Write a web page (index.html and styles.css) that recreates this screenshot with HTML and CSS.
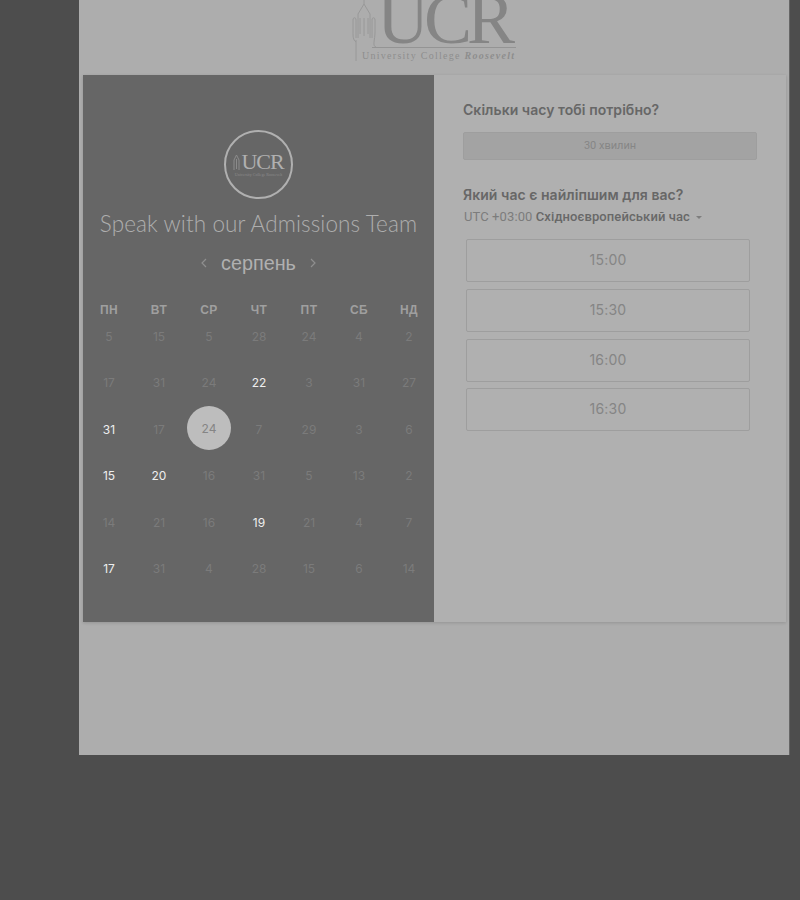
FILE: index.html
```html
<!DOCTYPE html>
<html lang="uk">
<head>
<meta charset="utf-8">
<title>Speak with our Admissions Team</title>
<link rel="stylesheet" href="styles.css">
</head>
<body>
<main class="page">
  <header class="header">
    <div class="logo">
      <svg class="tower" width="24" height="61" viewBox="0 0 24 61" fill="none" stroke="#989898" stroke-width="1">
        <path d="M4 40V61M4 42C1 40 1 36 1 32V20C1 17 4 17 4 20V38M6 38V14L12 4L18 14V38M8 18V34M12 18V36M16 18V34M12 4V0M20 38V20C20 17 23 17 23 20V32C23 40 20 46 24 47"/>
      </svg>
      <div class="logo-text">
        <div class="logo-mark">UCR</div>
        <div class="logo-rule"></div>
        <div class="logo-sub"><span>University College</span> <em>Roosevelt</em></div>
      </div>
    </div>
  </header>
  <section class="card">
    <div class="left">
      <div class="badge">
        <div class="badge-row">
          <svg class="badge-tower" width="7" height="16" viewBox="0 0 7 16" fill="none" stroke="#8c8c8c" stroke-width="1"><path d="M1 16V6L3.5 1L6 6V16M3.5 5V15"/></svg>
          <span class="badge-mark">UCR</span>
        </div>
        <div class="badge-sub">University College Roosevelt</div>
      </div>
      <h1 class="title">Speak with our Admissions Team</h1>
      <div class="month">
        <svg width="8" height="10" viewBox="0 0 8 10" fill="none" stroke="#8f8f8f" stroke-width="1.2"><path d="M6 1L2 5L6 9"/></svg>
        <span class="month-name">серпень</span>
        <svg width="8" height="10" viewBox="0 0 8 10" fill="none" stroke="#8f8f8f" stroke-width="1.2"><path d="M2 1L6 5L2 9"/></svg>
      </div>
      <div class="weekdays">
        <span>ПН</span><span>ВТ</span><span>СР</span><span>ЧТ</span><span>ПТ</span><span>СБ</span><span>НД</span>
      </div>
      <div class="days">
        <span>5</span><span>15</span><span>5</span><span>28</span><span>24</span><span>4</span><span>2</span>
        <span>17</span><span>31</span><span>24</span><span class="on">22</span><span>3</span><span>31</span><span>27</span>
        <span class="on">31</span><span>17</span><span class="sel">24</span><span>7</span><span>29</span><span>3</span><span>6</span>
        <span class="on">15</span><span class="on">20</span><span>16</span><span>31</span><span>5</span><span>13</span><span>2</span>
        <span>14</span><span>21</span><span>16</span><span class="on">19</span><span>21</span><span>4</span><span>7</span>
        <span class="on">17</span><span>31</span><span>4</span><span>28</span><span>15</span><span>6</span><span>14</span>
      </div>
    </div>
    <div class="right">
      <h2 class="q q-first">Скільки часу тобі потрібно?</h2>
      <div class="duration">30 хвилин</div>
      <h2 class="q q-second">Який час є найліпшим для вас?</h2>
      <div class="tz">UTC +03:00 <b>Східноєвропейський час</b> <i class="caret"></i></div>
      <div class="slots">
        <div class="slot">15:00</div>
        <div class="slot">15:30</div>
        <div class="slot">16:00</div>
        <div class="slot">16:30</div>
      </div>
    </div>
  </section>
</main>
</body>
</html>
```
FILE: styles.css
```css
* { box-sizing: border-box; }
html, body { margin: 0; height: 900px; overflow: hidden; }
body { background: #4d4d4d; padding-left: 79px; font-family: "Liberation Sans", sans-serif; }
.page { width: 711px; height: 755px; background: #adadad; border-right: 1px solid #666; padding: 0 3px 0 4px; }
.header { height: 75px; overflow: hidden; display: flex; align-items: flex-end; padding: 0 0 14px 269px; }
.logo { display: flex; align-items: flex-end; }
.logo-text { width: 144px; margin-left: -4px; display: flex; flex-direction: column; }
.logo-mark { height: 46px; padding-left: 5px; font-family: "Liberation Serif", serif; font-size: 72px; line-height: 36px; letter-spacing: -5px; color: #858585; }
.logo-rule { height: 1px; background: #949494; }
.logo-sub { margin-left: -10px; height: 13px; font-family: "Liberation Serif", serif; font-size: 10px; line-height: 16px; letter-spacing: 1.27px; color: #8e8e8e; white-space: nowrap; }
.logo-sub em { font-weight: bold; }
.card { height: 547px; display: flex; background: #b0b0b0; box-shadow: 0 1px 3px rgba(0,0,0,.15); }
.left { width: 351px; flex: none; background: #666; padding-top: 55px; display: flex; flex-direction: column; align-items: center; }
.badge { width: 69px; height: 69px; border: 2px solid #b0b0b0; border-radius: 50%; display: flex; flex-direction: column; align-items: center; justify-content: center; }
.badge-row { display: flex; align-items: center; gap: 1px; }
.badge-tower { margin-top: -1px; }
.badge-mark { font-family: "Liberation Serif", serif; font-size: 22px; letter-spacing: -1px; color: #b0b0b0; line-height: 20px; }
.badge-sub { font-family: "Liberation Serif", serif; font-size: 4px; line-height: 5px; color: #8c8c8c; white-space: nowrap; }
.title { margin: 10px 0 0; font-family: Lato, sans-serif; font-weight: 300; font-size: 22.5px; line-height: 30px; letter-spacing: .1px; color: #aeaeae; white-space: nowrap; }
.month { margin-top: 12px; height: 24px; display: flex; align-items: center; gap: 13px; }
.month-name { font-size: 19.8px; line-height: 24px; color: #b0b0b0; }
.weekdays, .days { width: 350px; margin-left: 1px; display: grid; grid-template-columns: repeat(7, 1fr); justify-items: center; align-items: center; }
.weekdays { margin-top: 27px; height: 16px; font-size: 12px; font-weight: bold; letter-spacing: .4px; color: #9f9f9f; }
.days { margin-top: 8px; grid-auto-rows: 20px; row-gap: 26.5px; font-family: Inter, sans-serif; font-size: 12px; color: #7b7b7b; }
.days .on { color: #eee; }
.days .sel { width: 44px; height: 44px; margin-top: -4px; border-radius: 50%; background: #bdbdbd; color: #858585; display: flex; align-items: center; justify-content: center; position: relative; top: 1px; }
.right { flex: 1; padding: 0 29px; }
.q { margin: 0; font-family: Inter, sans-serif; font-size: 14px; line-height: 20px; font-weight: 600; letter-spacing: .05px; color: #676767; white-space: nowrap; }
.q-first { margin-top: 25px; }
.q-second { margin-top: 25px; }
.duration { margin-top: 12px; height: 28px; padding-bottom: 1px; background: #a3a3a3; border: 1px solid #9e9e9e; border-radius: 2px; display: flex; align-items: center; justify-content: center; font-family: Roboto, sans-serif; font-size: 11px; color: #868686; }
.tz { margin: 2px 0 0 1px; font-family: Roboto, sans-serif; font-size: 13px; line-height: 20px; color: #7c7c7c; white-space: nowrap; letter-spacing: .1px; }
.tz b { font-weight: 500; color: #686868; }
.caret { display: inline-block; width: 0; height: 0; margin-left: 3px; border: 3px solid transparent; border-top: 3px solid #7e7e7e; border-bottom: 0; vertical-align: middle; }
.slots { margin: 12px 7px 0 3px; display: flex; flex-direction: column; gap: 6.8px; }
.slot { height: 43px; padding-bottom: 2px; border: 1px solid #9e9e9e; border-radius: 2px; display: flex; align-items: center; justify-content: center; font-family: Inter, sans-serif; font-size: 14px; letter-spacing: .2px; color: #858585; }
```
